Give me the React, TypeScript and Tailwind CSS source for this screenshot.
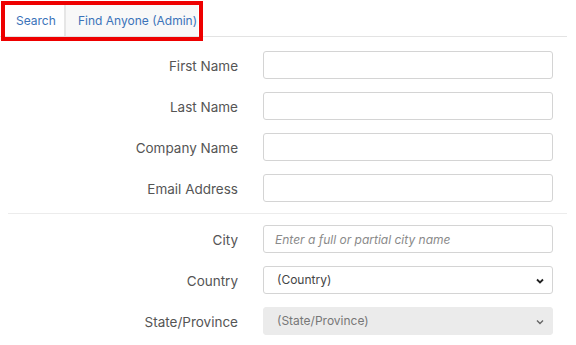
import React from "react";

const font = { fontFamily: "Inter, 'Noto Sans', sans-serif" };

function Row({ label, children }: { label: string; children: React.ReactNode }) {
  return (
    <div className="grid grid-cols-[238px_290px] gap-x-[25px] items-center h-[28px]">
      <div className="text-right text-[13.5px] text-[#555] pt-[2px]">{label}</div>
      {children}
    </div>
  );
}

function TextInput({ placeholder }: { placeholder?: string }) {
  return (
    <input
      type="text"
      placeholder={placeholder}
      className="h-[28px] w-full rounded-[3px] border border-[#d4d4d4] bg-white px-[11px] text-[12px] italic placeholder:text-[#8a8a8a] outline-none"
      style={font}
    />
  );
}

function Select({ text, disabled }: { text: string; disabled?: boolean }) {
  return (
    <div
      className={
        "h-[28px] w-full rounded-[3px] border flex items-center justify-between pl-[13px] pr-[8px] text-[12px] " +
        (disabled ? "bg-[#ebebeb] border-[#ebebeb] text-[#777]" : "bg-white border-[#d4d4d4] text-[#444]")
      }
    >
      <span>{text}</span>
      <svg width="8" height="6" viewBox="0 0 8 6" className="mt-[1px]">
        <path d="M1 1.5l3 3 3-3" fill="none" stroke={disabled ? "#666" : "#222"} strokeWidth={disabled ? 1.4 : 1.8} />
      </svg>
    </div>
  );
}

export default function App() {
  return (
    <div className="relative w-[576px] h-[345px] bg-white overflow-hidden" style={font}>
      <div className="pt-[5px] pr-[9px]">
        <div className="flex h-[32px] border-b border-[#e3e3e3]">
          <div className="w-[66px] pl-[16px] flex items-center bg-white border-r-2 border-[#e6e6e6] text-[12px] text-[#3b73b9]">
            Search
          </div>
          <div className="w-[132px] flex items-center pl-[12px] bg-[#f8f8f8] text-[12px] text-[#3b73b9]">
            Find Anyone (Admin)
          </div>
        </div>
      </div>

      <div className="flex flex-col gap-[13px] pt-[14px]">
        <Row label="First Name"><TextInput /></Row>
        <Row label="Last Name"><TextInput /></Row>
        <Row label="Company Name"><TextInput /></Row>
        <Row label="Email Address"><TextInput /></Row>
      </div>

      <div className="ml-[8px] mr-[9px] mt-[11px] border-t border-[#ececec]" />

      <div className="flex flex-col gap-[13px] pt-[11px]">
        <Row label="City"><TextInput placeholder="Enter a full or partial city name" /></Row>
        <Row label="Country"><Select text="(Country)" /></Row>
        <Row label="State/Province"><Select text="(State/Province)" disabled /></Row>
      </div>

      <div className="absolute left-[1px] top-[1px] w-[202px] h-[40px] border-[4px] border-[#ee0000] pointer-events-none" />
    </div>
  );
}
